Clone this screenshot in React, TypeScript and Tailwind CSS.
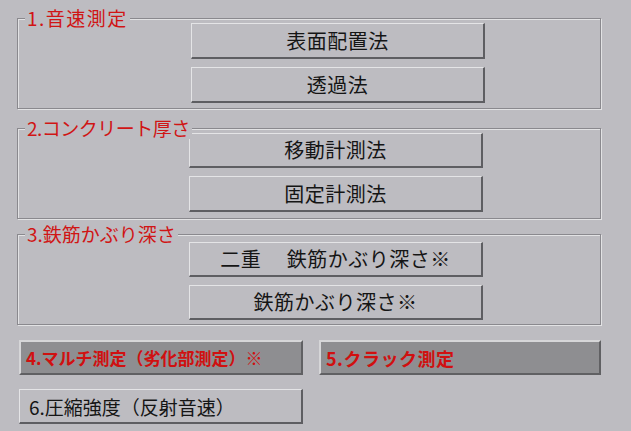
import React from "react"

const font = { fontFamily: '"MS UI Gothic", "Noto Sans CJK JP", sans-serif' }

function Btn({ label, className = "" }: { label: string; className?: string }) {
    return (
        <button
            className={`w-[294px] flex items-center justify-center bg-[#bdbcc1] text-[20px] tracking-[0.5px] text-[#151515] leading-none border-t border-l border-t-[#e4e4e6] border-l-[#e4e4e6] border-r-2 border-b-2 border-r-[#5e5e62] border-b-[#5e5e62] ${className}`}
        >
            {label}
        </button>
    )
}

function Group({
    title,
    titleClass = "",
    buttons,
    className = "",
}: {
    title: string
    titleClass?: string
    buttons: { label: string; h: string }[]
    className?: string
}) {
    return (
        <div
            className={`relative ml-[17px] w-[584px] h-[91px] border border-[#8a898e] shadow-[inset_1px_1px_0_#e2e2e4,1px_1px_0_#e2e2e4] ${className}`}
        >
            <span
                className={`absolute left-[7px] top-[-12px] px-[2px] bg-[#bdbcc1] text-[19px] leading-[22px] text-[#d01515] ${titleClass}`}
            >
                {title}
            </span>
            <div className="flex flex-col items-start pl-[173px] pt-[4px] gap-[8px]">
                {buttons.map((b) => (
                    <Btn key={b.label} label={b.label} className={b.h} />
                ))}
            </div>
        </div>
    )
}

function RedBtn({ label, className = "" }: { label: string; className?: string }) {
    return (
        <button
            className={`h-[35px] flex items-center bg-[#8e8e91] pl-[5px] text-[17px] font-bold text-[#d01010] leading-none border-t-2 border-l-2 border-t-[#d6d6d8] border-l-[#d6d6d8] border-r-2 border-b-2 border-r-[#606063] border-b-[#606063] ${className}`}
        >
            {label}
        </button>
    )
}

export default function App() {
    return (
        <div className="w-[631px] h-[431px] bg-[#bdbcc1] overflow-hidden pt-[18px]" style={font}>
            <Group
                title="1.音速測定"
                titleClass="tracking-[1.5px]"
                buttons={[
                    { label: "表面配置法", h: "h-[36px]" },
                    { label: "透過法", h: "h-[36px]" },
                ]}
            />
            <Group
                className="mt-[19px]"
                title="2.コンクリート厚さ"
                titleClass="tracking-[-0.5px]"
                buttons={[
                    { label: "移動計測法", h: "h-[35px] ml-[-2px]" },
                    { label: "固定計測法", h: "h-[36px] ml-[-2px]" },
                ]}
            />
            <Group
                className="mt-[15px]"
                title="3.鉄筋かぶり深さ"
                buttons={[
                    { label: "二重　 鉄筋かぶり深さ※", h: "h-[35px] ml-[-2px] mt-[3px]" },
                    { label: "鉄筋かぶり深さ※", h: "h-[35px] ml-[-2px]" },
                ]}
            />
            <div className="flex mt-[15px] ml-[19px] gap-[16px]">
                <RedBtn label="4.マルチ測定（劣化部測定）※" className="w-[284px]" />
                <RedBtn label="5.クラック測定" className="w-[282px] text-[18px] tracking-[0.5px]" />
            </div>
            <div className="mt-[14px] ml-[19px]">
                <button className="w-[284px] h-[35px] flex items-center pl-[9px] bg-[#bdbcc1] text-[19px] text-[#151515] leading-none border-t border-l border-t-[#e4e4e6] border-l-[#e4e4e6] border-r-2 border-b-2 border-r-[#5e5e62] border-b-[#5e5e62]">
                    6.圧縮強度（反射音速）
                </button>
            </div>
        </div>
    )
}
